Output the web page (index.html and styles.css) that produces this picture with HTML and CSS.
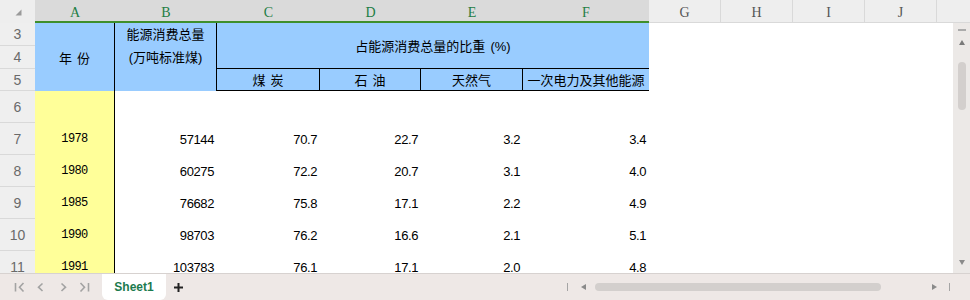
FILE: index.html
```html
<!DOCTYPE html>
<html lang="zh-CN">
<head>
    <meta charset="UTF-8">
    <title>Sheet1</title>
    <link rel="stylesheet" href="styles.css">
</head>
<body>
    <div class="sheet">
        <!-- column headers -->
        <div class="corner">
            <svg width="7" height="7" viewBox="0 0 7 7"><path d="M6.5 0.5V6.5H0.5Z" fill="#9a9a9a"/></svg>
        </div>
        <div class="ch sel">A</div>
        <div class="ch sel">B</div>
        <div class="ch sel">C</div>
        <div class="ch sel">D</div>
        <div class="ch sel">E</div>
        <div class="ch sel">F</div>
        <div class="ch">G</div>
        <div class="ch">H</div>
        <div class="ch">I</div>
        <div class="ch">J</div>
        <div class="ch end"></div>

        <!-- merged table header -->
        <div class="cell head h-year">年 份</div>
        <div class="cell head h-total">能源消费总量<br>(万吨标准煤)</div>
        <div class="cell head h-share">占能源消费总量的比重 (%)</div>
        <div class="cell head h-sub col-c">煤 炭</div>
        <div class="cell head h-sub col-d">石 油</div>
        <div class="cell head h-sub col-e">天然气</div>
        <div class="cell head h-sub col-f">一次电力及其他能源</div>

        <div class="vscroll">
            <span class="vs-dash"></span>
            <svg class="vs-up" width="6" height="5" viewBox="0 0 6 5"><path d="M3 0L6 5H0Z" fill="#7a7a7a"/></svg>
            <span class="vs-thumb"></span>
            <svg class="vs-down" width="6" height="5" viewBox="0 0 6 5"><path d="M0 0H6L3 5Z" fill="#8a8a8a"/></svg>
        </div>

        <div class="rh">3</div>
        <div class="rh">4</div>
        <div class="rh">5</div>

        <div class="rh">6</div>
        <div class="cell yr"></div>
        <div class="cell"></div>
        <div class="cell"></div>
        <div class="cell"></div>
        <div class="cell"></div>
        <div class="cell"></div>

        <div class="rh">7</div>
        <div class="cell yr">1978</div>
        <div class="cell num">57144</div>
        <div class="cell num">70.7</div>
        <div class="cell num">22.7</div>
        <div class="cell num">3.2</div>
        <div class="cell num">3.4</div>

        <div class="rh">8</div>
        <div class="cell yr">1980</div>
        <div class="cell num">60275</div>
        <div class="cell num">72.2</div>
        <div class="cell num">20.7</div>
        <div class="cell num">3.1</div>
        <div class="cell num">4.0</div>

        <div class="rh">9</div>
        <div class="cell yr">1985</div>
        <div class="cell num">76682</div>
        <div class="cell num">75.8</div>
        <div class="cell num">17.1</div>
        <div class="cell num">2.2</div>
        <div class="cell num">4.9</div>

        <div class="rh">10</div>
        <div class="cell yr">1990</div>
        <div class="cell num">98703</div>
        <div class="cell num">76.2</div>
        <div class="cell num">16.6</div>
        <div class="cell num">2.1</div>
        <div class="cell num">5.1</div>

        <div class="rh">11</div>
        <div class="cell yr">1991</div>
        <div class="cell num">103783</div>
        <div class="cell num">76.1</div>
        <div class="cell num">17.1</div>
        <div class="cell num">2.0</div>
        <div class="cell num">4.8</div>
    </div>

    <div class="tabbar">
        <svg class="tab-nav" width="102" height="26" viewBox="0 0 102 26">
            <g fill="none" stroke="#a3a3a3" stroke-width="1.6">
                <path d="M15.5 9V17.5"/>
                <path d="M23.5 9L19.5 13.2L23.5 17.5"/>
                <path d="M42.5 9.5L38.5 13.2L42.5 17"/>
                <path d="M61.5 9.5L65.5 13.2L61.5 17"/>
                <path d="M80.5 9L84.5 13.2L80.5 17.5"/>
                <path d="M88.5 9V17.5"/>
            </g>
        </svg>
        <div class="tab">Sheet1</div>
        <svg class="tab-add" width="11" height="11" viewBox="0 0 11 11">
            <path d="M5.5 1V10M1 5.5H10" stroke="#222" stroke-width="2"/>
        </svg>

        <div class="hscroll">
            <span class="hs-line"></span>
            <svg class="hs-left" width="5" height="6" viewBox="0 0 5 6"><path d="M5 0V6L0 3Z" fill="#8a8a8a"/></svg>
            <span class="hs-thumb"></span>
            <svg class="hs-right" width="5" height="6" viewBox="0 0 5 6"><path d="M0 0V6L5 3Z" fill="#8a8a8a"/></svg>
            <span class="hs-line end"></span>
        </div>
    </div>
</body>
</html>
```

FILE: styles.css
```css
/* page */
* {
    box-sizing: border-box;
}

body {
    margin: 0;
    width: 970px;
    height: 300px;
    overflow: hidden;
    background-color: #fff;
    font-family: "Liberation Sans", "Noto Sans CJK SC", sans-serif;
    color: #000;
}

/* worksheet grid */
.sheet {
    display: grid;
    grid-template-columns: 35px 80px 102px 103px 101px 102px 126px repeat(4, 72px) 16px 17px;
    grid-template-rows: 23px 23px 23px 22px repeat(6, 32px);
    height: 273px;
    overflow: hidden;
}

/* column headers */
.corner {
    background-color: #eeeeee;
    padding: 9px 0 0 15px;
}

.corner svg {
    display: block;
}

.ch {
    background-color: #eeeeee;
    border-right: 1px solid #d9d9d9;
    border-bottom: 1px solid #d9d9d9;
    font-family: "Liberation Serif", serif;
    font-size: 14px;
    line-height: 16px;
    color: #555;
    text-align: center;
    padding-top: 5px;
}

.ch.sel {
    background-color: #dadada;
    color: #1e7e45;
    border-right: none;
    border-bottom: 2px solid #3f8f2c;
}

.ch.end {
    grid-column: span 2;
    border-right: none;
}

/* row headers */
.rh {
    grid-column: 1;
    background-color: #efefef;
    border-bottom: 1px solid #d9d9d9;
    font-size: 14px;
    color: #6a6a6a;
    display: flex;
    align-items: center;
    justify-content: center;
}

/* cells */
.cell {
    display: flex;
    align-items: center;
}

.head {
    background-color: #99ccff;
    justify-content: center;
    font-size: 13px;
    word-spacing: 1.5px;
    white-space: nowrap;
}

.h-year {
    grid-column: 2;
    grid-row: 2 / 5;
    border-right: 1px solid #000;
}

.h-total {
    grid-column: 3;
    grid-row: 2 / 5;
    border-right: 1px solid #000;
    display: block;
    text-align: center;
    line-height: 23px;
}

.h-share {
    grid-column: 4 / 8;
    grid-row: 2 / 4;
    border-bottom: 1px solid #000;
}

.h-sub {
    grid-row: 4;
    border-right: 1px solid #000;
    border-bottom: 1px solid #000;
}

.col-c { grid-column: 4; }
.col-d { grid-column: 5; }
.col-e { grid-column: 6; }
.col-f { grid-column: 7; border-right: none; }

.yr {
    background-color: #ffff99;
    border-right: 1px solid #000;
    justify-content: center;
    font-family: "Liberation Mono", monospace;
    font-size: 12px;
    letter-spacing: -0.6px;
}

.num {
    justify-content: flex-end;
    padding-right: 3px;
    font-size: 13px;
    letter-spacing: -0.4px;
}

/* vertical scrollbar */
.vscroll {
    grid-column: 13;
    grid-row: 2 / 12;
    align-self: start;
    height: 250px;
    background-color: #ece9e7;
    display: flex;
    flex-direction: column;
    align-items: center;
    padding-top: 6px;
}

.vs-dash {
    width: 8px;
    height: 2px;
    background-color: #ababab;
}

.vs-up {
    margin-top: 9px;
}

.vs-thumb {
    margin-top: 17px;
    width: 8px;
    height: 48px;
    border-radius: 4px;
    background-color: #d3cfcd;
}

.vs-down {
    margin-top: auto;
    margin-bottom: 8px;
}

/* sheet tabs */
.tabbar {
    display: flex;
    align-items: center;
    height: 27px;
    border-top: 1px solid #d7d2d0;
    background-color: #eee8e6;
}

.tab-nav {
    display: block;
}

.tab {
    align-self: stretch;
    width: 64px;
    background-color: #fff;
    border-radius: 0 0 6px 6px;
    display: flex;
    align-items: center;
    justify-content: center;
    font-size: 12px;
    font-weight: bold;
    color: #1b7a4e;
}

.tab-add {
    margin-left: 7px;
}

/* horizontal scrollbar */
.hscroll {
    margin-left: auto;
    margin-right: 20px;
    display: flex;
    align-items: center;
}

.hs-line {
    width: 1px;
    height: 8px;
    background-color: #a5a5a5;
}

.hs-left {
    margin-left: 13px;
}

.hs-thumb {
    margin-left: 9px;
    width: 286px;
    height: 8px;
    border-radius: 4px;
    background-color: #d3cfcd;
}

.hs-right {
    margin-left: 51px;
}

.hs-line.end {
    margin-left: 12px;
}
```
